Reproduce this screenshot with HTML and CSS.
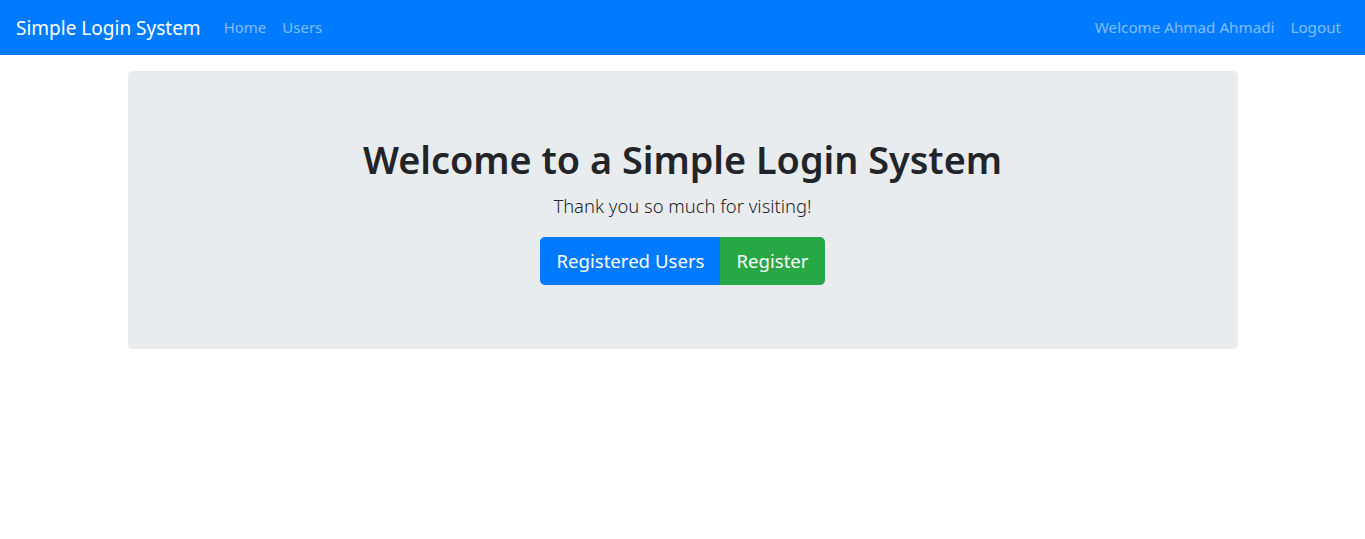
FILE: index.html
```html
<!DOCTYPE html>
<html lang="en">
<head>
<meta charset="utf-8">
<title>Simple Login System</title>
<link rel="stylesheet" href="styles.css">
</head>
<body>
<nav class="navbar">
  <a class="brand" href="#">Simple Login System</a>
  <ul class="nav">
    <li><a class="nav-link" href="#">Home</a></li>
    <li><a class="nav-link" href="#">Users</a></li>
  </ul>
  <ul class="nav nav-right">
    <li><a class="nav-link" href="#">Welcome Ahmad Ahmadi</a></li>
    <li><a class="nav-link" href="#">Logout</a></li>
  </ul>
</nav>
<main class="container">
  <section class="jumbotron">
    <h1 class="title">Welcome to a Simple Login System</h1>
    <p class="lead">Thank you so much for visiting!</p>
    <div class="btn-group">
      <a class="btn btn-primary" href="#">Registered Users</a>
      <a class="btn btn-success" href="#">Register</a>
    </div>
  </section>
</main>
</body>
</html>
```
FILE: styles.css
```css
* { box-sizing: border-box; }
html, body { margin: 0; padding: 0; }
body {
  font-family: "Noto Sans", "Open Sans", "DejaVu Sans", sans-serif;
  font-size: 16px;
  line-height: 1.5;
  color: #212529;
  background: #fff;
}
a { text-decoration: none; }

.navbar {
  display: flex;
  align-items: center;
  background: #007bff;
  padding: 8px 16px;
  height: 55px;
}
.brand {
  color: #fff;
  font-size: 19px;
  line-height: 30px;
  padding: 5px 0;
  margin-right: 15px;
  white-space: nowrap;
}
.nav {
  display: flex;
  list-style: none;
  margin: 0;
  padding: 0;
}
.nav-right { margin-left: auto; }
.nav-link {
  display: block;
  padding: 8px 8px;
  color: rgba(255, 255, 255, 0.5);
  font-size: 15px;
  white-space: nowrap;
}
.nav-right .nav-link { font-size: 15.2px; }

.container {
  width: 1140px;
  margin: 0 auto;
  padding: 0 15px;
}
.jumbotron {
  margin-top: 16px;
  background: #e9ecef;
  border-radius: 4.8px;
  padding: 64px 32px;
  display: flex;
  flex-direction: column;
  align-items: center;
  text-align: center;
}
.title {
  margin: 0 0 8px;
  padding-top: 2px;
  font-size: 37.8px;
  font-weight: 600;
  line-height: 46px;
  color: #212529;
}
.lead {
  margin: 0 0 16px;
  font-size: 18.4px;
  font-weight: 300;
  line-height: 30px;
  color: #212529;
}
.btn-group { display: flex; }
.btn {
  display: block;
  padding: 8px 16px;
  font-size: 18.6px;
  line-height: 32px;
  color: #fff;
}
.btn-primary {
  background: #007bff;
  border-radius: 4.8px 0 0 4.8px;
}
.btn-success {
  background: #28a745;
  border-radius: 0 4.8px 4.8px 0;
}
```
